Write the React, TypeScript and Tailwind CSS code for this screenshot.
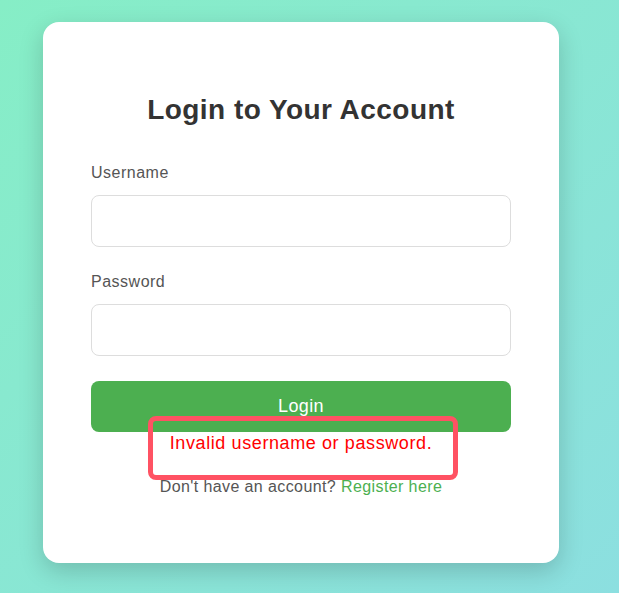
import React from "react";

export default function App() {
  return (
    <div
      className="min-h-[593px] w-full bg-gradient-to-br from-[#86eec6] to-[#8cdfe0] pt-[22px] pl-[43px]"
      style={{ fontFamily: '"Liberation Sans", Arial, sans-serif' }}
    >
      <div className="relative w-[516px] h-[541px] bg-white rounded-[16px] shadow-[0_8px_24px_rgba(0,0,0,0.18)] px-[48px] pt-[72px]">
        <h2 className="text-[28px] leading-[32px] font-bold text-[#333] text-center tracking-[0.45px]">
          Login to Your Account
        </h2>
        <div className="mt-[38px]">
          <label className="block text-[16px] leading-[18px] text-[#555] tracking-[0.5px]">Username</label>
          <input
            type="text"
            className="mt-[13px] block w-full h-[52px] border border-[#ddd] rounded-[8px] px-3 outline-none"
          />
        </div>
        <div className="mt-[26px]">
          <label className="block text-[16px] leading-[18px] text-[#555] tracking-[0.5px]">Password</label>
          <input
            type="password"
            className="mt-[13px] block w-full h-[52px] border border-[#ddd] rounded-[8px] px-3 outline-none"
          />
        </div>
        <button className="mt-[25px] block w-full h-[51px] bg-[#4caf50] rounded-[8px] text-white text-[18px] leading-[21px] tracking-[0.4px]">
          Login
        </button>
        <p className="mt-[1px] text-[18px] leading-[21px] text-[#ff0000] text-center tracking-[0.6px]">
          Invalid username or password.
        </p>
        <p className="mt-[24px] text-[16px] leading-[18px] text-[#555] text-center tracking-[0.4px]">
          Don't have an account? <a className="text-[#4caf50]">Register here</a>
        </p>
        <div className="absolute left-[105px] top-[394px] w-[310px] h-[64px] border-[5px] border-[#ff5263] rounded-[8px]" />
      </div>
    </div>
  );
}
